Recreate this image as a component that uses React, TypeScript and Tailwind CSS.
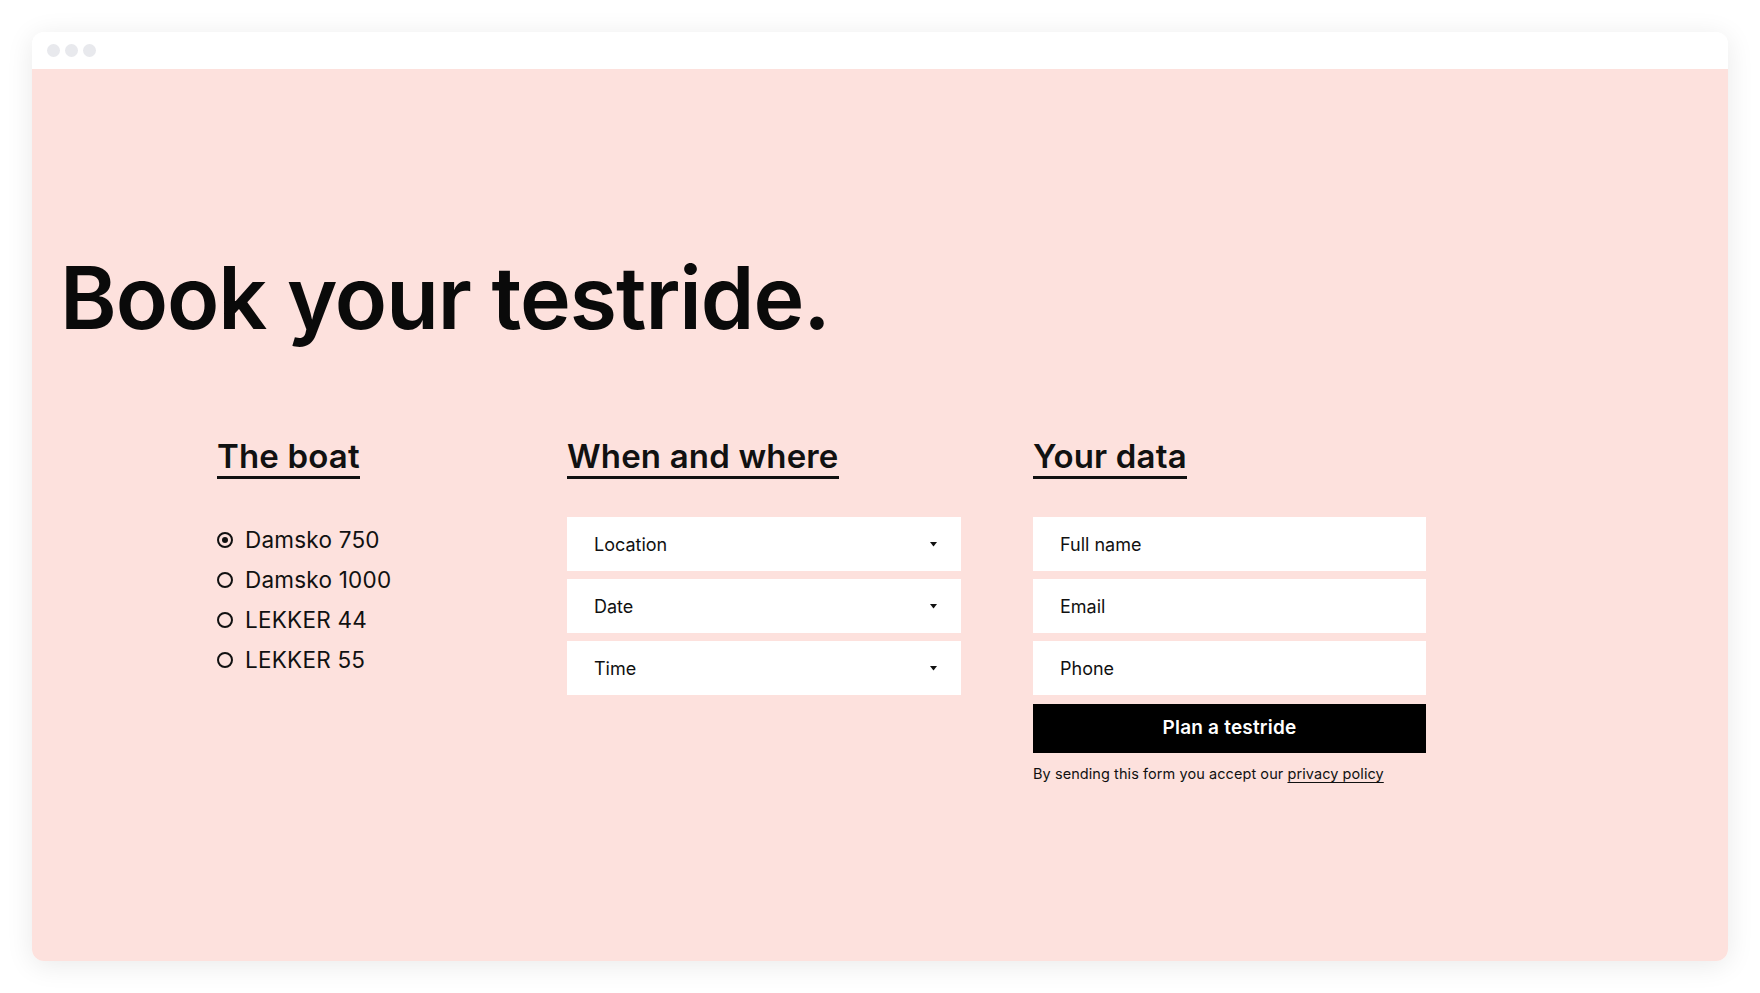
import React from "react";

const boats = [
  { label: "Damsko 750", checked: true },
  { label: "Damsko 1000", checked: false },
  { label: "LEKKER 44", checked: false },
  { label: "LEKKER 55", checked: false },
];

function Arrow() {
  return (
    <svg width="7" height="5" viewBox="0 0 7 5" className="shrink-0">
      <path d="M0 0 H7 L3.5 4.5 Z" fill="#111" />
    </svg>
  );
}

function SelectBox({ label }: { label: string }) {
  return (
    <div className="flex h-[54px] items-center justify-between bg-white pl-[27px] pr-[24px] text-[18px] text-[#111]">
      <span>{label}</span>
      <Arrow />
    </div>
  );
}

function InputBox({ label }: { label: string }) {
  return (
    <div className="flex h-[54px] items-center bg-white pl-[27px] text-[18px] text-[#111]">
      <span>{label}</span>
    </div>
  );
}

function SectionTitle({ children }: { children: React.ReactNode }) {
  return (
    <div>
      <h2 className="inline-block border-b-[3px] border-[#111] pb-[3px] text-[33px] font-semibold leading-none tracking-[0.005em] text-[#111]">
        {children}
      </h2>
    </div>
  );
}

export default function App() {
  return (
    <div className="h-[993px] w-[1760px] bg-white px-[32px] pt-[32px] font-['Inter',sans-serif]">
      <div className="flex h-[929px] w-[1696px] flex-col overflow-hidden rounded-[12px] shadow-[0_4px_28px_rgba(0,0,0,0.09)]">
        <div className="flex h-[37px] items-center gap-[5px] bg-white pl-[15px]">
          <span className="h-[13px] w-[13px] rounded-full bg-[#e8e9ed]" />
          <span className="h-[13px] w-[13px] rounded-full bg-[#e8e9ed]" />
          <span className="h-[13px] w-[13px] rounded-full bg-[#e8e9ed]" />
        </div>
        <div className="flex-1 bg-[#fde1dd] pt-[186px]">
          <h1 className="pl-[28px] text-[86px] font-semibold leading-none tracking-[-0.012em] text-[#0a0a0a]">
            Book your testride.
          </h1>
          <div className="mt-[99px] flex pl-[185px]">
            <div className="w-[350px]">
              <SectionTitle>The boat</SectionTitle>
              <ul className="mt-[41px]">
                {boats.map((b) => (
                  <li key={b.label} className="flex h-[40px] items-center gap-[12px] text-[22.5px] tracking-[0.01em] text-[#111]">
                    <span className="flex h-[16px] w-[16px] items-center justify-center rounded-full border-[2.5px] border-[#111]">
                      {b.checked && <span className="h-[6px] w-[6px] rounded-full bg-[#111]" />}
                    </span>
                    <span>{b.label}</span>
                  </li>
                ))}
              </ul>
            </div>
            <div className="w-[394px]">
              <SectionTitle>When and where</SectionTitle>
              <div className="mt-[38px] flex flex-col gap-[8px]">
                <SelectBox label="Location" />
                <SelectBox label="Date" />
                <SelectBox label="Time" />
              </div>
            </div>
            <div className="ml-[72px] w-[393px]">
              <SectionTitle>Your data</SectionTitle>
              <div className="mt-[38px] flex flex-col gap-[8px]">
                <InputBox label="Full name" />
                <InputBox label="Email" />
                <InputBox label="Phone" />
              </div>
              <button className="mt-[9px] flex h-[49px] w-full items-center justify-center bg-black text-[19px] font-semibold tracking-[0.01em] text-white">
                Plan a testride
              </button>
              <p className="mt-[10px] text-[14.5px] tracking-[0.005em] text-[#111]">
                By sending this form you accept our{" "}
                <span className="underline decoration-[1px] underline-offset-[3px]">privacy policy</span>
              </p>
            </div>
          </div>
        </div>
      </div>
    </div>
  );
}
